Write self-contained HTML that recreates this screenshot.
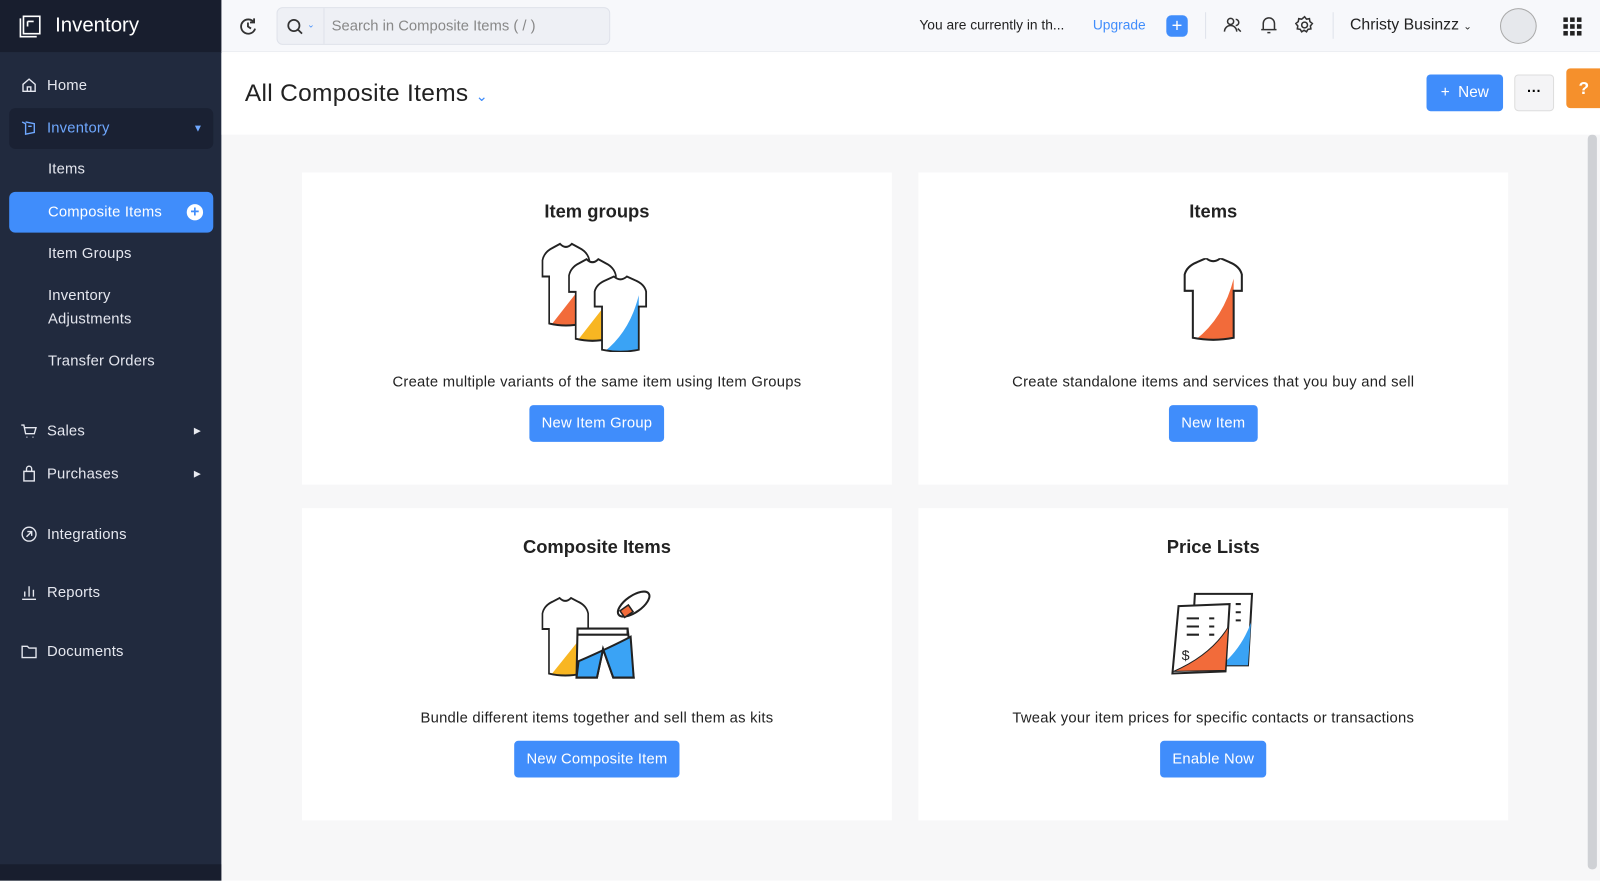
<!DOCTYPE html>
<html><head><meta charset="utf-8"><style>
*{box-sizing:border-box;margin:0;padding:0}
html,body{width:1600px;height:881px;overflow:hidden;background:#fff;font-family:"Liberation Sans",sans-serif}
#w{width:1568px;height:863px;transform:scale(1.0204);transform-origin:0 0;position:relative}
.sb{position:absolute;left:0;top:0;width:217px;height:863px;background:#212a3e;color:#e8eaf0}
.logo{height:51px;background:#181e2e;display:flex;align-items:center;padding-left:18px;font-size:20px;color:#fff;gap:10px}
.nav{position:absolute;left:0;font-size:14.5px;display:flex;align-items:center;gap:9px;color:#e5e7ef;letter-spacing:.2px}
.sub{position:absolute;left:47px;font-size:14.5px;color:#e5e7ef;line-height:23px;letter-spacing:.2px}
.hdr{position:absolute;left:217px;top:0;right:0;height:51px;background:#f7f8fb;border-bottom:1px solid #eceef2}
.main{position:absolute;left:217px;top:52px;right:0;bottom:0;background:#f7f7f8}
.top{position:absolute;left:0;top:0;right:0;height:80px;background:#fff}
.card{position:absolute;background:#fff;width:578px;height:306px;text-align:center}
.card h3{font-size:18px;font-weight:bold;color:#222;margin-top:28px}
.card p{position:absolute;left:0;right:0;top:198px;font-size:14.5px;color:#222;letter-spacing:.25px}
.btn{position:absolute;top:228px;left:50%;transform:translateX(-50%);background:#408dfb;color:#fff;font-size:14.5px;height:36px;line-height:36px;padding:0 12px;border-radius:4px;white-space:nowrap;letter-spacing:.2px}
.ill{position:absolute;left:50%;top:68px;transform:translateX(-50%)}
</style></head><body><div id="w">
<div class="sb">
 <div class="logo"><svg width="26" height="26" viewBox="0 0 26 26" fill="none" stroke="#fff" stroke-width="1.6"><path d="M5 3h16v17H5zM2 5v18h16M9 8h6M9 8v5"/></svg>Inventory</div>
 <div class="nav" style="top:75px;left:20px"><svg width="17" height="17" viewBox="0 0 20 20" fill="none" stroke="#e5e7ef" stroke-width="1.6"><path d="M3 9l7-6 7 6v8H3zM8 17v-5h4v5"/></svg>Home</div>
 <div style="position:absolute;left:9px;top:106px;width:200px;height:40px;background:#1a2133;border-radius:6px"></div>
 <div class="nav" style="top:117px;left:20px;color:#6fa8ff"><svg width="17" height="17" viewBox="0 0 20 20" fill="none" stroke="#6fa8ff" stroke-width="1.6"><path d="M2 3l4 2v12l10-2V5L6 3M9 8h4"/></svg>Inventory</div>
 <div style="position:absolute;left:189px;top:121px;color:#6fa8ff;font-size:10px">▼</div>
 <div class="sub" style="top:155px">Items</div>
 <div style="position:absolute;left:9px;top:188px;width:200px;height:40px;background:#408dfb;border-radius:6px"></div>
 <div class="sub" style="top:197px;color:#fff">Composite Items</div>
 <div style="position:absolute;left:183px;top:200px;width:16px;height:16px;border-radius:50%;background:#fff;color:#408dfb;font-size:15px;line-height:15px;text-align:center;font-weight:bold">+</div>
 <div class="sub" style="top:238px">Item Groups</div>
 <div class="sub" style="top:279px">Inventory<br>Adjustments</div>
 <div class="sub" style="top:343px">Transfer Orders</div>
 <div class="nav" style="top:414px;left:20px"><svg width="17" height="17" viewBox="0 0 20 20" fill="none" stroke="#e5e7ef" stroke-width="1.6"><path d="M1 3h3l2 10h10l2-7H5M7 17h1M14 17h1"/></svg>Sales</div>
 <div style="position:absolute;left:190px;top:417px;font-size:9px">▶</div>
 <div class="nav" style="top:456px;left:20px"><svg width="17" height="17" viewBox="0 0 20 20" fill="none" stroke="#e5e7ef" stroke-width="1.6"><path d="M4 7h12v11H4zM7 7V4a3 3 0 016 0v3"/></svg>Purchases</div>
 <div style="position:absolute;left:190px;top:459px;font-size:9px">▶</div>
 <div class="nav" style="top:515px;left:20px"><svg width="17" height="17" viewBox="0 0 20 20" fill="none" stroke="#e5e7ef" stroke-width="1.6"><circle cx="10" cy="10" r="8"/><path d="M7 13l6-6M8 7h5v5"/></svg>Integrations</div>
 <div class="nav" style="top:572px;left:20px"><svg width="17" height="17" viewBox="0 0 20 20" fill="none" stroke="#e5e7ef" stroke-width="1.6"><path d="M2 18h16M5 15V9M10 15V3M15 15V7"/></svg>Reports</div>
 <div class="nav" style="top:630px;left:20px"><svg width="17" height="17" viewBox="0 0 20 20" fill="none" stroke="#e5e7ef" stroke-width="1.6"><path d="M2 4h6l2 2h8v11H2z"/></svg>Documents</div>
 <div style="position:absolute;left:0;bottom:0;width:217px;height:16px;background:#181e2e"></div>
</div>
<div class="hdr">
 <svg style="position:absolute;left:16px;top:16px" width="20" height="20" viewBox="0 0 20 20" fill="none" stroke="#333" stroke-width="1.8"><path d="M16 6A7 7 0 1 0 17 12M16 2v4h-4M10 6v4l3 2"/></svg>
 <div style="position:absolute;left:54px;top:7px;width:327px;height:37px;background:#eef0f5;border:1px solid #dfe2ea;border-radius:6px">
  <svg style="position:absolute;left:9px;top:10px" width="16" height="16" viewBox="0 0 16 16" fill="none" stroke="#333" stroke-width="1.7"><circle cx="7" cy="7" r="5.5"/><path d="M11 11l4 4"/></svg>
  <span style="position:absolute;left:29px;top:11px;font-size:9px;color:#408dfb">⌄</span>
  <div style="position:absolute;left:45px;top:0;height:35px;border-left:1px solid #dfe2ea"></div>
  <span style="position:absolute;left:53px;top:10px;font-size:14.5px;color:#888">Search in Composite Items ( / )</span>
 </div>
 <span style="position:absolute;left:684px;top:17px;font-size:13.5px;color:#222">You are currently in th...</span>
 <span style="position:absolute;left:854px;top:17px;font-size:13.5px;color:#408dfb">Upgrade</span>
 <div style="position:absolute;left:926px;top:15px;width:21px;height:21px;background:#408dfb;border-radius:5px;color:#fff;font-size:18px;line-height:20px;text-align:center">+</div>
 <div style="position:absolute;left:964px;top:12px;height:26px;border-left:1px solid #dfe2ea"></div>
 <svg style="position:absolute;left:982px;top:16px" width="18" height="18" viewBox="0 0 18 18" fill="none" stroke="#333" stroke-width="1.5"><circle cx="7" cy="5" r="3"/><path d="M1 15a6 6 0 0112 0M12 9a3 3 0 100-6M14 12l3 3"/></svg>
 <svg style="position:absolute;left:1018px;top:15px" width="17" height="19" viewBox="0 0 17 19" fill="none" stroke="#333" stroke-width="1.5"><path d="M3 14V8a5.5 5.5 0 0111 0v6h2H1zM7 17h3"/></svg>
 <svg style="position:absolute;left:1052px;top:15px" width="19" height="19" viewBox="0 0 20 20" fill="none" stroke="#333" stroke-width="1.6"><circle cx="10" cy="10" r="3"/><path d="M10 1.5l2 2.5 3-.5.5 3 2.5 2-2 2.5.5 3-3 .5-1.5 2.5-2.5-1.5-2.5 1.5-1.5-2.5-3-.5.5-3-2-2.5 2.5-2 .5-3 3 .5z"/></svg>
 <div style="position:absolute;left:1089px;top:12px;height:26px;border-left:1px solid #dfe2ea"></div>
 <span style="position:absolute;left:1106px;top:16px;font-size:15.5px;color:#222">Christy Businzz <span style="font-size:10px">⌄</span></span>
 <div style="position:absolute;left:1253px;top:8px;width:36px;height:35px;border-radius:50%;background:#e6e8ec;border:1px solid #aaa"></div>
 <svg style="position:absolute;left:1315px;top:17px" width="18" height="18" viewBox="0 0 18 18" fill="#222"><rect x="0" y="0" width="4.5" height="4.5"/><rect x="6.7" y="0" width="4.5" height="4.5"/><rect x="13.4" y="0" width="4.5" height="4.5"/><rect x="0" y="6.7" width="4.5" height="4.5"/><rect x="6.7" y="6.7" width="4.5" height="4.5"/><rect x="13.4" y="6.7" width="4.5" height="4.5"/><rect x="0" y="13.4" width="4.5" height="4.5"/><rect x="6.7" y="13.4" width="4.5" height="4.5"/><rect x="13.4" y="13.4" width="4.5" height="4.5"/></svg>
</div>
<div class="main">
 <div class="top">
  <span style="position:absolute;left:23px;top:26px;font-size:24px;color:#222;letter-spacing:.3px">All Composite Items <span style="font-size:14px;color:#408dfb">⌄</span></span>
  <div style="position:absolute;left:1181px;top:21px;width:75px;height:36px;background:#408dfb;border-radius:4px;color:#fff;font-size:15px;line-height:36px;text-align:center">+&nbsp; New</div>
  <div style="position:absolute;left:1267px;top:21px;width:39px;height:36px;background:#f4f4f6;border:1px solid #ddd;border-radius:4px;text-align:center;line-height:30px;font-weight:bold;font-size:14px">···</div>
  <div style="position:absolute;left:1318px;top:15px;width:40px;height:39px;background:#f5902c;border-radius:4px;color:#fff;font-size:17px;line-height:39px;padding-left:12px;font-weight:bold">?</div>
 </div>
 <div style="position:absolute;right:3px;top:80px;width:9px;height:720px;background:#cfd1d5;border-radius:4px"></div>
 <svg width="0" height="0" style="position:absolute"><defs>
  <path id="sh" d="M14 4 L23 0 Q30 6 37 0 L46 4 Q56 8 58 16 L58 32 L50 32 L50 78 Q30 82 10 78 L10 32 L2 32 L2 16 Q4 8 14 4 Z"/>
  <clipPath id="cs"><use href="#sh"/></clipPath>
 </defs></svg>
 <div class="card" style="left:79px;top:117px"><h3>Item groups</h3>
  <svg class="ill" width="112" height="108" viewBox="0 0 112 108">
   <g transform="translate(1,2) scale(0.82,1)"><use href="#sh" fill="#fff"/><g clip-path="url(#cs)"><path d="M10 82 L50 40 L50 82Z" fill="#f26b3a"/></g><use href="#sh" fill="none" stroke="#222" stroke-width="2"/></g>
   <g transform="translate(27,17) scale(0.82,1)"><use href="#sh" fill="#fff"/><g clip-path="url(#cs)"><path d="M10 82 L50 40 L50 82Z" fill="#f8b622"/></g><use href="#sh" fill="none" stroke="#222" stroke-width="2"/></g>
   <g transform="translate(52,34) scale(0.9,0.92)"><use href="#sh" fill="#fff"/><g clip-path="url(#cs)"><path d="M10 82 Q40 60 50 20 L50 82Z" fill="#3aa3f5"/></g><use href="#sh" fill="none" stroke="#222" stroke-width="2"/></g>
  </svg>
  <p>Create multiple variants of the same item using Item Groups</p><div class="btn">New Item Group</div></div>
 <div class="card" style="left:683px;top:117px"><h3>Items</h3>
  <svg class="ill" style="top:84px" width="70" height="84" viewBox="0 0 60 84"><use href="#sh" fill="#fff"/><g clip-path="url(#cs)"><path d="M10 82 Q40 60 50 20 L50 82Z" fill="#f26b3a"/></g><use href="#sh" fill="none" stroke="#222" stroke-width="2"/></svg>
  <p>Create standalone items and services that you buy and sell</p><div class="btn">New Item</div></div>
 <div class="card" style="left:79px;top:446px"><h3>Composite Items</h3>
  <svg class="ill" style="top:78px" width="112" height="92" viewBox="0 0 112 92">
   <g transform="translate(1,10) scale(0.8,0.95)"><use href="#sh" fill="#fff"/><g clip-path="url(#cs)"><path d="M10 82 L50 40 L50 82Z" fill="#f8b622"/></g><use href="#sh" fill="none" stroke="#222" stroke-width="2"/></g>
   <path d="M37 40 L86 40 L92 88 L72 88 L62 60 L56 88 L36 88 Z" fill="#fff" stroke="#222" stroke-width="2"/>
   <path d="M38 72 Q70 58 89 48 L92 88 L72 88 L62 60 L56 88 L36 88Z" fill="#3aa3f5" stroke="#222" stroke-width="2"/>
   <path d="M37 40 L86 40 L86 46 L37 46Z" fill="#fff" stroke="#222" stroke-width="2"/>
   <ellipse cx="92" cy="16" rx="18" ry="8" transform="rotate(-35 92 16)" fill="none" stroke="#222" stroke-width="2"/>
   <rect x="80" y="19" width="10" height="8" transform="rotate(-35 85 23)" fill="#f26b3a" stroke="#222" stroke-width="1.5"/>
  </svg>
  <p>Bundle different items together and sell them as kits</p><div class="btn">New Composite Item</div></div>
 <div class="card" style="left:683px;top:446px"><h3>Price Lists</h3>
  <svg class="ill" style="top:82px" width="84" height="82" viewBox="0 0 84 82">
   <path d="M24 2 L80 2 L76 72 L20 72 Z" fill="#fff" stroke="#222" stroke-width="2"/>
   <path d="M50 72 L76 72 L79 30 Q70 55 50 72Z" fill="#3aa3f5"/>
   <path d="M8 14 L58 12 L54 78 L2 80 Z" fill="#fff" stroke="#222" stroke-width="2"/>
   <path d="M3 78 L54 77 L57 34 Q40 62 3 78Z" fill="#f26b3a" stroke="#222" stroke-width="1"/>
   <path d="M16 26h12M16 34h12M16 42h12M38 26h5M38 34h5M38 42h5M64 12h5M64 20h5M64 28h5" stroke="#222" stroke-width="2"/>
   <text x="11" y="67" font-size="14" font-family="Liberation Sans" fill="#222">$</text>
  </svg>
  <p>Tweak your item prices for specific contacts or transactions</p><div class="btn">Enable Now</div></div>
</div>
</div></body></html>
